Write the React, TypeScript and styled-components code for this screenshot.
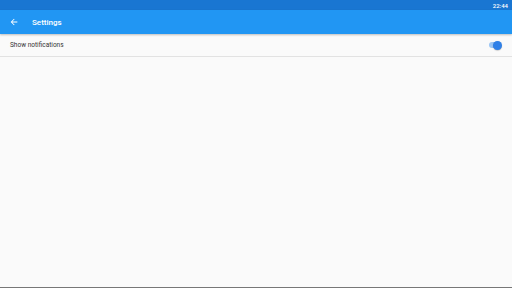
import styled, { createGlobalStyle } from 'styled-components'

const Global = createGlobalStyle`
  html, body { margin: 0; padding: 0; }
  body {
    width: 512px;
    height: 288px;
    overflow: hidden;
    background: #fafafa;
    font-family: Roboto, "Liberation Sans", sans-serif;
  }
`

const Screen = styled.div`
  width: 512px;
  height: 288px;
  display: flex;
  flex-direction: column;
  background: #fafafa;
  border-bottom: 1px solid #777;
  box-sizing: border-box;
`

const StatusBar = styled.div`
  height: 10px;
  background: #1976d2;
  display: flex;
  justify-content: flex-end;
  align-items: center;
  padding-right: 4px;
  color: #fff;
  font-size: 6px;
  font-weight: 500;
`

const AppBar = styled.div`
  height: 24px;
  background: #2196f3;
  display: flex;
  align-items: center;
  padding-left: 9px;
  gap: 13px;
  color: #fff;
  box-shadow: 0 1px 2px rgba(0, 0, 0, 0.25);
  position: relative;
  z-index: 1;
`

const Title = styled.div`
  font-size: 8px;
  font-weight: 500;
`

const Row = styled.div`
  height: 22px;
  display: flex;
  align-items: center;
  justify-content: space-between;
  padding: 0 11px 0 10px;
  border-bottom: 1px solid #e2e2e2;
`

const Label = styled.div`
  font-size: 6.5px;
  color: #333;
`

const Switch = styled.div<{ on: boolean }>`
  width: 12px;
  height: 6px;
  border-radius: 3px;
  background: ${p => (p.on ? '#9cc6f5' : '#bbb')};
  position: relative;
  &::after {
    content: '';
    position: absolute;
    top: -1.5px;
    left: ${p => (p.on ? '4px' : '-2px')};
    width: 9px;
    height: 9px;
    border-radius: 50%;
    background: ${p => (p.on ? '#2f80e8' : '#f1f1f1')};
    box-shadow: 0 0.5px 1px rgba(0, 0, 0, 0.3);
  }
`

const App = () => {
  return (
    <>
      <Global />
      <Screen>
        <StatusBar>22:44</StatusBar>
        <AppBar>
          <svg width="10" height="10" viewBox="0 0 24 24">
            <path d="M20 11H7.83l5.59-5.59L12 4l-8 8 8 8 1.41-1.41L7.83 13H20v-2z" fill="#fff" />
          </svg>
          <Title>Settings</Title>
        </AppBar>
        <Row>
          <Label>Show notifications</Label>
          <Switch on />
        </Row>
      </Screen>
    </>
  )
}

export default App
